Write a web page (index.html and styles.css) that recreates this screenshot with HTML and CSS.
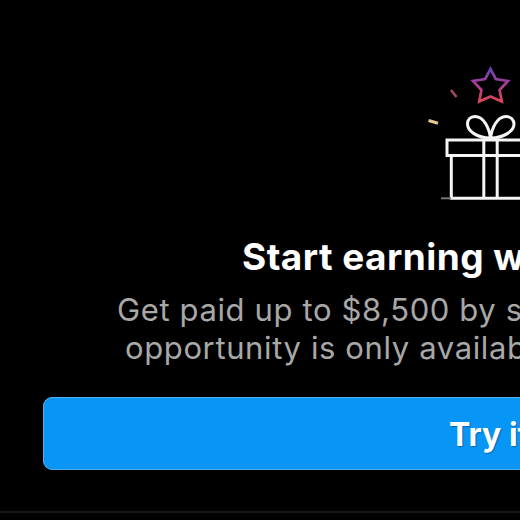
FILE: index.html
```html
<!DOCTYPE html>
<html lang="en">
  <head>
    <meta charset="UTF-8" />
    <meta name="viewport" content="width=device-width, initial-scale=1.0" />
    <title>Start earning</title>
    <link rel="stylesheet" href="styles.css">
  </head>
  <body>
    <main class="promo">
      <svg class="gift" width="100" height="150" viewBox="420 60 100 150" fill="none">
        <defs>
          <linearGradient id="starColor" x1="0" y1="0" x2="0" y2="1">
            <stop offset="0" stop-color="#6544b4" />
            <stop offset="0.5" stop-color="#ad3c93" />
            <stop offset="1" stop-color="#dc4657" />
          </linearGradient>
        </defs>
        <path d="M490.5 69L495.8 79L508 81L499.6 90L501.8 101.500L490.5 96.5L479.3 101.500L481.4 90L473 81L485.2 79Z" stroke="url(#starColor)" stroke-width="2.7" />
        <path d="M451 90L456.5 97" stroke="#a64b5c" stroke-width="2.6" />
        <path d="M428.5 120.5L438 123.3" stroke="#e5c995" stroke-width="3" />
        <g stroke="#f5f5f5" stroke-width="3">
          <path d="M490.5 138C489 128 484 116.500 475 116.500C470 116.500 467.500 120 467.500 124C467.500 131 477 138 490.500 138C504 138 514 131 514 124C514 120 511 116.500 506 116.500C497 116.500 492 128 490.500 138" />
          <path d="M522 140H447V155.500H522M451.300 155.500V198.200H522M483.800 140V198M497.200 140V198" />
        </g>
        <path d="M441 198.300H451" stroke="#777" stroke-width="2" />
      </svg>
      <h1 class="title">Start earning w</h1>
      <p class="text">Get paid up to $8,500 by s</p>
      <p class="text second">opportunity is only availab</p>
      <button class="try">Try it</button>
    </main>
  </body>
</html>
```
FILE: styles.css
```css
html {
  height: 100%;
}
body {
  margin: 0;
  height: 100%;
  overflow: hidden;
  background-color: #000;
  font-family: Inter, "Liberation Sans", sans-serif;
}
.promo {
  box-sizing: border-box;
  height: 513px;
  padding-top: 60px;
  border-bottom: 2px solid #171717;
  overflow: hidden;
  white-space: nowrap;
}
.gift {
  display: block;
  margin-left: 420px;
}
.title {
  margin: 24px 0 0 242px;
  color: #fff;
  font-size: 37px;
  font-weight: 700;
  line-height: 46px;
  letter-spacing: 0.45px;
}
.text {
  margin: 11px 0 0 117px;
  color: #a8a8a8;
  font-size: 31px;
  font-weight: 400;
  line-height: 38px;
  letter-spacing: 0.62px;
}
.text.second {
  margin: 0 0 0 125px;
}
.try {
  box-sizing: border-box;
  display: block;
  width: 894px;
  height: 73px;
  margin: 30px 0 0 43px;
  padding: 2px 0 0 405px;
  background-color: #0795f6;
  border: 1px solid #54aee9;
  border-radius: 9px;
  color: #fff;
  font-family: inherit;
  font-size: 32px;
  font-weight: 700;
  text-align: left;
  text-shadow: 1px 1px 1px #0868ac;
  cursor: pointer;
}
```
